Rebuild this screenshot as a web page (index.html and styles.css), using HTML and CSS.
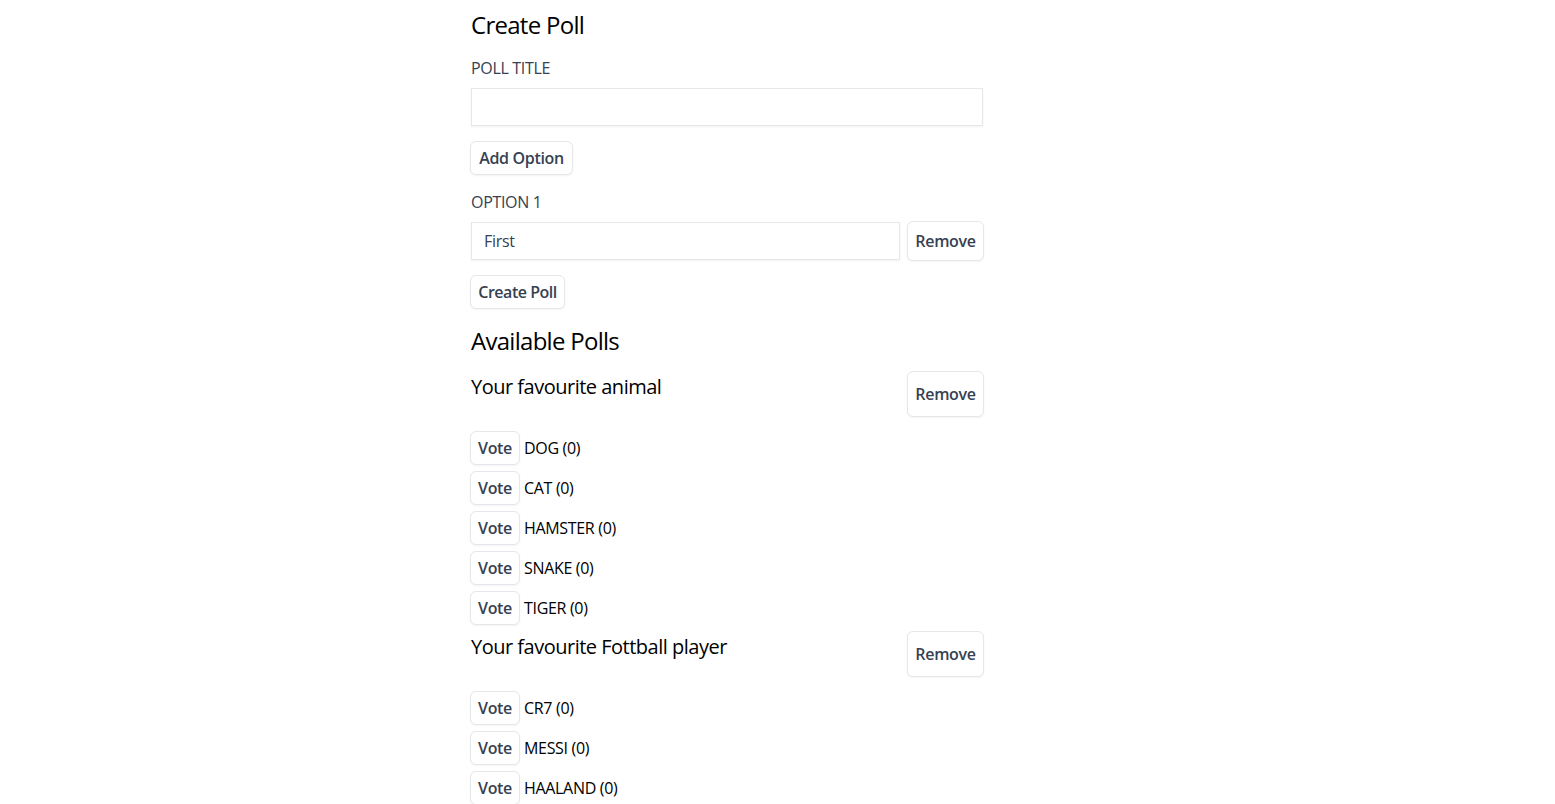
FILE: index.html
```html
<!DOCTYPE html>
<html lang="en">
<head>
<meta charset="utf-8">
<title>Polls</title>
<link rel="stylesheet" href="styles.css">
</head>
<body>
<main class="container">
  <h1 class="heading">Create Poll</h1>
  <label class="label label-title" for="title">Poll Title</label>
  <input class="input input-title" id="title" type="text">
  <button class="btn btn-add">Add Option</button>
  <label class="label label-option" for="opt1">Option 1</label>
  <div class="option-row">
    <input class="input input-option" id="opt1" type="text" value="First">
    <button class="btn btn-remove-opt">Remove</button>
  </div>
  <button class="btn btn-create">Create Poll</button>

  <h1 class="heading heading-available">Available Polls</h1>

  <section class="poll">
    <div class="poll-head">
      <h2 class="poll-title">Your favourite animal</h2>
      <button class="btn btn-remove-poll">Remove</button>
    </div>
    <div class="vote-row"><button class="btn btn-vote">Vote</button><span class="opt-text">DOG (0)</span></div>
    <div class="vote-row"><button class="btn btn-vote">Vote</button><span class="opt-text">CAT (0)</span></div>
    <div class="vote-row"><button class="btn btn-vote">Vote</button><span class="opt-text">HAMSTER (0)</span></div>
    <div class="vote-row"><button class="btn btn-vote">Vote</button><span class="opt-text">SNAKE (0)</span></div>
    <div class="vote-row"><button class="btn btn-vote">Vote</button><span class="opt-text">TIGER (0)</span></div>
  </section>

  <section class="poll">
    <div class="poll-head">
      <h2 class="poll-title">Your favourite Fottball player</h2>
      <button class="btn btn-remove-poll">Remove</button>
    </div>
    <div class="vote-row"><button class="btn btn-vote">Vote</button><span class="opt-text">CR7 (0)</span></div>
    <div class="vote-row"><button class="btn btn-vote">Vote</button><span class="opt-text">MESSI (0)</span></div>
    <div class="vote-row"><button class="btn btn-vote">Vote</button><span class="opt-text">HAALAND (0)</span></div>
  </section>
</main>
</body>
</html>
```

FILE: styles.css
```css
* { box-sizing: border-box; }

html, body {
  margin: 0;
  padding: 0;
  background: #ffffff;
}

body {
  font-family: "Open Sans", "Noto Sans", sans-serif;
  color: #000000;
  letter-spacing: -0.02em;
}

.container {
  width: 512px;
  margin-left: 471px;
  padding-top: 9px;
  display: flex;
  flex-direction: column;
  align-items: flex-start;
}

.heading {
  margin: 0;
  font-size: 24px;
  line-height: 32px;
  font-weight: 400;
  color: #000;
  letter-spacing: -0.03em;
}

.heading-available {
  margin-top: 16px;
  margin-bottom: 14px;
}

.label {
  display: block;
  font-size: 16px;
  line-height: 24px;
  text-transform: uppercase;
  color: #374151;
}

.label-title { margin-top: 15px; }
.label-option { margin-top: 15px; }

.input {
  display: block;
  height: 38px;
  margin: 8px 0 0 0;
  padding: 0 12px;
  border: 1px solid #e5e7eb;
  border-radius: 0;
  box-shadow: 0 1px 2px rgba(0, 0, 0, 0.06);
  font-family: inherit;
  font-size: 16px;
  color: #374151;
  letter-spacing: -0.02em;
  outline: none;
}

.input-title { width: 512px; }

.btn {
  display: inline-flex;
  align-items: center;
  justify-content: center;
  height: 34px;
  padding: 0 6px;
  background: #ffffff;
  border: 1px solid #e5e7eb;
  border-radius: 6px;
  box-shadow: 0 1px 2px rgba(0, 0, 0, 0.05);
  font-family: inherit;
  font-size: 16px;
  font-weight: 600;
  color: #374151;
  letter-spacing: -0.02em;
  white-space: nowrap;
  cursor: pointer;
}

.btn-add {
  margin-top: 15px;
  margin-left: -1px;
  width: 103px;
}

.option-row {
  display: flex;
  align-items: center;
  gap: 7px;
  width: 513px;
  margin-top: 7px;
}

.input-option {
  flex: 1;
  margin: 0;
}

.btn-remove-opt {
  height: 40px;
  width: 77px;
}

.btn-create {
  margin-top: 14px;
  margin-left: -1px;
  width: 95px;
  letter-spacing: -0.03em;
}

.poll {
  width: 513px;
  display: flex;
  flex-direction: column;
  gap: 6px;
  margin-bottom: 6px;
}

.poll-head {
  display: flex;
  justify-content: space-between;
  align-items: flex-start;
  margin-bottom: 8px;
}

.poll-title {
  margin: 0;
  padding-top: 2px;
  font-size: 20px;
  line-height: 28px;
  font-weight: 400;
  color: #000;
  letter-spacing: -0.025em;
}

.btn-remove-poll {
  height: 46px;
  width: 77px;
}

.vote-row {
  display: flex;
  align-items: center;
  gap: 4px;
  margin-left: -1px;
}

.btn-vote {
  width: 50px;
}

.opt-text {
  font-size: 16px;
  color: #000;
}
```
